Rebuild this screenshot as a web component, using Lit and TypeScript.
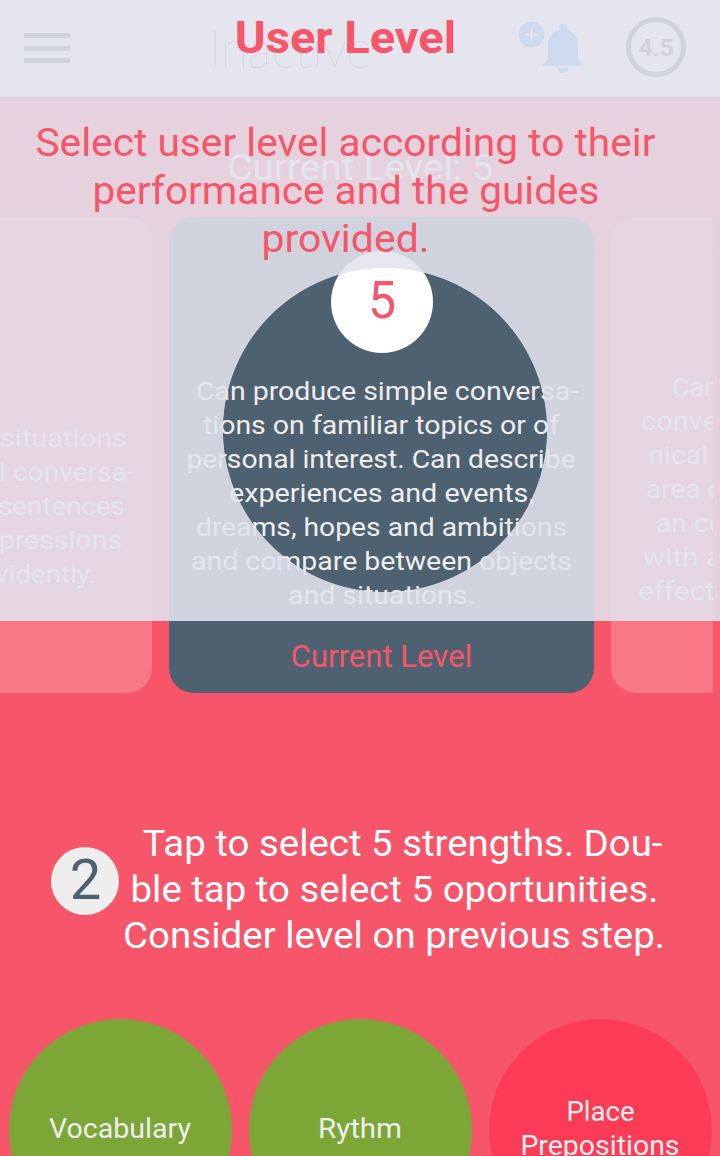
import { LitElement, html, svg, css } from "lit";
import { customElement, property } from "lit/decorators.js";

interface Line { t: string; x: number; w: number }

/** One or more lines of text, each set to a fixed measure. x is relative to the container. */
@customElement("text-lines")
class TextLines extends LitElement {
  @property({ attribute: false }) lines: Line[] = [];
  @property({ type: Number }) size = 28;
  @property({ type: Number }) leading = 34;
  @property({ type: Number }) base = 25.4;
  static styles = css`
    :host { display: block; }
    svg { display: block; width: 100%; overflow: visible; }
    text { fill: currentColor; white-space: pre; }
  `;
  render() {
    const pad = this.size * 0.04;
    return this.lines.map(l => html`
      <svg height=${this.leading}>
        ${svg`<text x=${l.x - pad} y=${this.base} font-size=${this.size} textLength=${l.w + pad * 2} lengthAdjust="spacingAndGlyphs">${l.t}</text>`}
      </svg>`);
  }
}

const intro: Line[] = [
  { t: "Select user level according to their", x: 37, w: 617 },
  { t: "performance and the guides", x: 94, w: 504 },
  { t: "provided.", x: 263, w: 165 },
];
const current: Line[] = [
  { t: "Can produce simple conversa-", x: 28, w: 380 },
  { t: "tions on familiar topics or of", x: 35, w: 354 },
  { t: "personal interest. Can describe", x: 18.5, w: 387 },
  { t: "experiences and events,", x: 61, w: 303 },
  { t: "dreams, hopes and ambitions", x: 28, w: 369 },
  { t: "and compare between objects", x: 23, w: 379 },
  { t: "and situations.", x: 120, w: 185 },
];
const previous: Line[] = [
  { t: "situations", x: 1, w: 125 },
  { t: "l conversa-", x: 0, w: 134 },
  { t: "sentences", x: -1, w: 125 },
  { t: "pressions", x: 0, w: 121 },
  { t: "vidently.", x: -4, w: 99 },
];
const next: Line[] = [
  { t: "Can", x: 62, w: 45 },
  { t: "conver", x: 31, w: 85 },
  { t: "nical", x: 38.5, w: 57.5 },
  { t: "area of", x: 36, w: 85 },
  { t: "an con", x: 46, w: 82 },
  { t: "with a", x: 33, w: 77 },
  { t: "effecti", x: 28, w: 82 },
];
const step: Line[] = [
  { t: "Tap to select 5 strengths. Dou-", x: 26, w: 517 },
  { t: "ble tap to select 5 oportunities.", x: 14, w: 525 },
  { t: "Consider level on previous step.", x: 6.5, w: 539 },
];
const skills: { kind: string; lines: Line[] }[] = [
  { kind: "good", lines: [{ t: "Vocabulary", x: 41, w: 140 }] },
  { kind: "good", lines: [{ t: "Rythm", x: 70, w: 82 }] },
  { kind: "bad", lines: [{ t: "Place", x: 78.5, w: 66 }, { t: "Prepositions", x: 32.5, w: 157 }] },
];

@customElement("app-root")
class AppRoot extends LitElement {
  static styles = css`
    :host {
      display: block; position: relative; width: 720px; height: 1156px; overflow: hidden;
      background: #f7556a; color: #eee; font-family: Roboto, "Noto Sans", sans-serif;
    }
    .header {
      box-sizing: border-box; height: 97px; background: #f4f4f6; border-bottom: 1px solid #c9c9d0;
      display: flex; align-items: flex-start; color: #4e6170;
    }
    .menu { display: grid; gap: 7.5px; width: 46px; margin: 33px 0 0 24px; }
    .menu span { height: 5px; background: #4e6170; }
    .brand { width: 156px; margin: 14px 0 0 143px; font-family: Lato, sans-serif; font-weight: 100; color: #30303c; }
    .brand text-lines { -webkit-text-stroke: .6px #50505c; }
    .bell { margin: 20px 0 0 147px; width: 68px; height: 56px; }
    .score {
      box-sizing: border-box; width: 60px; height: 60px; margin: 17px 0 0 42px; border: 5px solid #4e6170;
      border-radius: 50%; font-weight: 700; padding-top: 9px;
    }
    .heading { height: 120px; padding-top: 47px; box-sizing: border-box; }
    .track { width: 713px; height: 476px; overflow: hidden; display: grid; grid-template-columns: 152px 425px 425px; gap: 17px; }
    .card { box-sizing: border-box; background: #f87888; border-radius: 25px; }
    .prev { border-radius: 0 25px 25px 0; padding-top: 205px; }
    .next { padding-top: 154px; }
    .current { background: #4e6170; padding-top: 34px; }
    .badge { width: 102px; height: 102px; margin: 0 auto 22px 162px; border-radius: 50%; background: #fff; color: #f7556a; }
    .note { margin-top: 26px; color: #f7556a; }
    .step { display: flex; align-items: flex-start; padding: 128px 0 0 51px; color: #fff; }
    .num { width: 68px; height: 68px; margin-top: 26px; border-radius: 50%; background: #eee; color: #4e6170; }
    .copy { width: 560px; margin-left: -1px; }
    .skills { display: grid; grid-template-columns: repeat(3, 222.6px); gap: 17.4px; padding: 60px 0 0 9px; }
    .skill { height: 222px; border-radius: 50%; display: flex; flex-direction: column; justify-content: center; }
    .skill text-lines { width: 222px; }
    .good { background: #7ca737; }
    .bad { background: #fc3c57; }
    .overlay {
      position: absolute; inset: 0 0 auto 0; box-sizing: border-box; height: 621px; padding-top: 13px; color: #f7556a;
      background: radial-gradient(circle at 385px 430px, rgba(226,227,237,0) 161.6px, rgba(226,227,237,.88) 162.4px);
    }
    .title { font-weight: 700; margin-bottom: 55px; }
  `;
  render() {
    return html`
      <div class="header">
        <div class="menu"><span></span><span></span><span></span></div>
        <div class="brand"><text-lines size="53" leading="70" base="54" .lines=${[{ t: "Inactive", x: -2, w: 159 }]}></text-lines></div>
        <svg class="bell" viewBox="516 20 68 56">
          <circle cx="531.5" cy="34.5" r="13" fill="#3296ff"/>
          <path d="M531.5 28v13M525 34.5h13" stroke="#f4f4f6" stroke-width="1.8"/>
          <path fill="#3296ff" d="M559 28a4 4 0 0 1 8 0v1.8c7 2 11 7.5 11 14.7V60l5 4.2v1.5h-40v-1.5l5-4.2V44.500c0-7.200 4-12.700 11-14.700zM557.700 68h10.600a5.300 5 0 0 1-10.600 0z"/>
        </svg>
        <div class="score"><text-lines size="24" leading="32" base="25" .lines=${[{ t: "4.5", x: 8.5, w: 33.5 }]}></text-lines></div>
      </div>
      <div class="heading"><text-lines size="37" leading="46" base="35.500" .lines=${[{ t: "Current Level: 5", x: 229, w: 263 }]}></text-lines></div>
      <div class="track">
        <div class="card prev"><text-lines size="26.500" .lines=${previous}></text-lines></div>
        <div class="card current">
          <div class="badge"><text-lines size="51" leading="102" base="67" .lines=${[{ t: "5", x: 39, w: 24 }]}></text-lines></div>
          <text-lines size="26.500" .lines=${current}></text-lines>
          <text-lines class="note" size="31" leading="38" base="28" .lines=${[{ t: "Current Level", x: 123, w: 179 }]}></text-lines>
        </div>
        <div class="card next"><text-lines size="26.500" .lines=${next}></text-lines></div>
      </div>
      <div class="step">
        <div class="num"><text-lines size="56" leading="68" base="52" .lines=${[{ t: "2", x: 21, w: 27 }]}></text-lines></div>
        <text-lines class="copy" size="37" leading="46" base="34.500" .lines=${step}></text-lines>
      </div>
      <div class="skills">
        ${skills.map(s => html`<div class="skill ${s.kind}"><text-lines size="27" .lines=${s.lines}></text-lines></div>`)}
      </div>
      <div class="overlay">
        <text-lines class="title" size="43.500" leading="52" base="40" .lines=${[{ t: "User Level", x: 236.5, w: 218 }]}></text-lines>
        <text-lines size="39" leading="48" base="35.500" .lines=${intro}></text-lines>
      </div>`;
  }
}
